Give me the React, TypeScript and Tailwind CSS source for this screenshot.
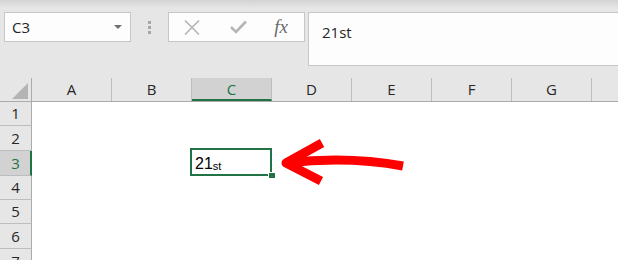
import React from "react";

const columns = ["A", "B", "C", "D", "E", "F", "G", ""];
const rows = [
  { n: 1, h: "h-[24px]" },
  { n: 2, h: "h-[25px]" },
  { n: 3, h: "h-[25px]" },
  { n: 4, h: "h-[24px]" },
  { n: 5, h: "h-[24px]" },
  { n: 6, h: "h-[25px]" },
  { n: 7, h: "h-[25px]" },
];

const Toolbar: React.FC = () => (
  <div className="h-[78px] flex items-start pt-[12px] pl-[4px] bg-[linear-gradient(#d3d3d3,#e6e6e6_8px)]">
    <div className="w-[127px] h-[30px] border border-[#c6c6c6] bg-[#fdfdfd] flex items-center pl-[7px] pr-[8px]">
      <span className="flex-1 text-[15px] text-[#262626] leading-none">C3</span>
      <svg width="8" height="5" viewBox="0 0 8 5">
        <polygon points="0,0 8,0 4,4" fill="#707070" />
      </svg>
    </div>
    <div className="w-[37px] h-[30px] flex flex-col items-center justify-center gap-[2px]">
      <div className="w-[3px] h-[3px] bg-[#a6a6a6]" />
      <div className="w-[3px] h-[3px] bg-[#a6a6a6]" />
      <div className="w-[3px] h-[3px] bg-[#a6a6a6]" />
    </div>
    <div className="w-[137px] h-[30px] border border-[#c6c6c6] bg-[#fdfdfd] flex items-center">
      <div className="w-[46px] flex justify-center">
        <svg width="16" height="15" viewBox="0 0 16 15">
          <path d="M1 0.5 L15 14.5 M15 0.5 L1 14.5" stroke="#b5b5b5" strokeWidth="1.6" fill="none" />
        </svg>
      </div>
      <div className="w-[46px] flex justify-center">
        <svg width="17" height="14" viewBox="0 0 17 14">
          <path d="M1 7 L6 12 L16 1.5" stroke="#b5b5b5" strokeWidth="2.6" fill="none" />
        </svg>
      </div>
      <div className="w-[40px] flex justify-center">
        <span className="font-['Liberation_Serif',serif] italic text-[19px] leading-none text-[#6a6a6a] -mt-[2px]">
          fx
        </span>
      </div>
    </div>
    <div className="ml-[3px] flex-1 h-[54px] border border-r-0 border-[#c6c6c6] bg-[#fdfdfd] pl-[13px] pt-[7px]">
      <span className="text-[15px] text-[#262626] leading-none">21st</span>
    </div>
  </div>
);

const App: React.FC = () => {
  return (
    <div className="relative w-[618px] h-[260px] overflow-hidden bg-white font-['Open_Sans',sans-serif]">
      <Toolbar />
      <div className="flex h-[24px] bg-[#e6e6e6] border-b border-[#ababab]">
        <div className="w-[32px] shrink-0 border-r border-[#ababab] flex items-end justify-end pr-[3px] pb-[2px]">
          <svg width="16" height="16" viewBox="0 0 16 16">
            <polygon points="16,0 16,16 0,16" fill="#b4b4b4" />
          </svg>
        </div>
        {columns.map((c, i) => (
          <div
            key={i}
            className={
              c === "C"
                ? "w-[80px] shrink-0 border-r border-[#bdbdbd] bg-[#d2d2d2] text-[#217346] border-b-2 border-b-[#217346] flex items-center justify-center text-[15px] pt-[2px]"
                : "w-[80px] shrink-0 border-r border-[#bdbdbd] text-[#262626] flex items-center justify-center text-[15px]"
            }
          >
            {c}
          </div>
        ))}
      </div>
      {rows.map((r) => (
        <div key={r.n} className={`flex ${r.h}`}>
          <div
            className={
              r.n === 3
                ? "w-[32px] shrink-0 bg-[#d2d2d2] border-r-2 border-[#217346] border-b border-b-[#bdbdbd] text-[#217346] flex items-center justify-center text-[15px] pl-[1px]"
                : "w-[32px] shrink-0 bg-[#e6e6e6] border-r border-[#ababab] border-b border-b-[#bdbdbd] text-[#262626] flex items-center justify-center text-[15px]"
            }
          >
            {r.n}
          </div>
          <div className="flex">
            <div className="w-[158px] shrink-0" />
            {r.n === 3 && (
              <div className="relative w-[80px] shrink-0">
                <div className="absolute -top-[3px] left-0 w-[82px] h-[28px] border-2 border-[#217346]" />
                <div className="absolute left-[78px] top-[21px] w-[7px] h-[6px] bg-[#217346] border-l border-t border-white" />
                <div className="flex items-baseline pl-[5px] pt-[2px] font-['Liberation_Sans',sans-serif] text-[#000]">
                  <span className="text-[16px] leading-[22px]">21</span>
                  <span className="text-[11px] leading-none translate-y-[1px]">st</span>
                </div>
              </div>
            )}
          </div>
        </div>
      ))}
      <svg className="absolute left-0 top-0 pointer-events-none" width="618" height="260" viewBox="0 0 618 260">
        <polyline points="322,143 286,163 321,181" stroke="#ff0000" strokeWidth="9" fill="none" strokeLinejoin="round" />
        <path d="M286 163 C 320 159, 360 158, 403 166" stroke="#ff0000" strokeWidth="9" fill="none" />
      </svg>
    </div>
  );
};

export default App;
